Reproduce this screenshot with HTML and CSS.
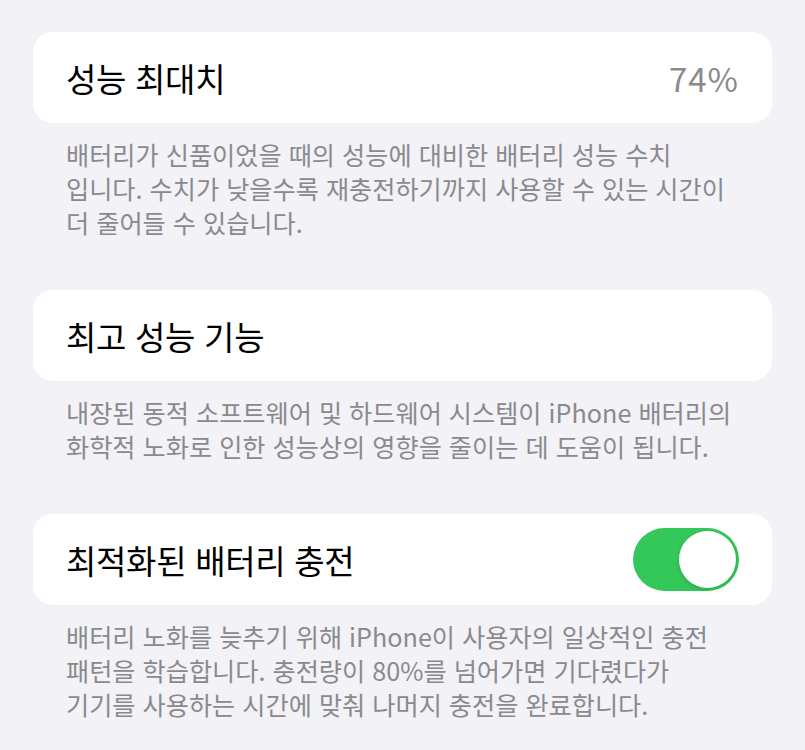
FILE: index.html
```html
<!DOCTYPE html>
<html lang="ko">

<head>
    <meta charset="utf-8">
    <title>배터리 성능 상태</title>
    <meta name="viewport" content="width=device-width, initial-scale=1">
    <link rel="stylesheet" href="styles.css">
</head>

<body>
    <div class="container">
        <section class="group">
            <div class="cell">
                <span class="cell-title">성능 최대치</span>
                <span class="cell-value">74%</span>
            </div>
            <p class="footer">배터리가 신품이었을 때의 성능에 대비한 배터리 성능 수치<br>입니다. 수치가 낮을수록 재충전하기까지 사용할 수 있는 시간이<br>더 줄어들 수 있습니다.</p>
        </section>

        <section class="group">
            <div class="cell">
                <span class="cell-title">최고 성능 기능</span>
            </div>
            <p class="footer">내장된 동적 소프트웨어 및 하드웨어 시스템이 iPhone 배터리의<br>화학적 노화로 인한 성능상의 영향을 줄이는 데 도움이 됩니다.</p>
        </section>

        <section class="group">
            <div class="cell">
                <span class="cell-title">최적화된 배터리 충전</span>
                <label class="switch">
                    <input type="checkbox" checked>
                    <span class="knob"></span>
                </label>
            </div>
            <p class="footer">배터리 노화를 늦추기 위해 iPhone이 사용자의 일상적인 충전<br>패턴을 학습합니다. 충전량이 80%를 넘어가면 기다렸다가<br>기기를 사용하는 시간에 맞춰 나머지 충전을 완료합니다.</p>
        </section>
    </div>
</body>

</html>
```

FILE: styles.css
```css
body {
    margin: 0;
    padding: 0;
    background-color: #f2f2f7;
    font-family: "Noto Sans CJK KR", "Noto Sans", sans-serif;
    color: #000;
}

.container {
    padding: 32px 33px 0 33px;
}

.group {
    margin-bottom: 51px;
}

.cell {
    display: flex;
    align-items: center;
    justify-content: space-between;
    height: 91px;
    padding: 0 33px;
    background-color: #fff;
    border-radius: 20px;
    box-sizing: border-box;
}

.cell-title {
    font-size: 33px;
    letter-spacing: -0.3px;
}

.cell-value {
    font-size: 33px;
    letter-spacing: 1px;
    color: #8a8a8e;
}

.footer {
    margin: 0;
    padding: 14px 0 0 33px;
    font-size: 25.2px;
    line-height: 34px;
    color: #8a8a8e;
    white-space: nowrap;
}

/* iOS style toggle */
.switch {
    position: relative;
    display: inline-block;
    width: 106px;
    height: 63px;
}

.switch input {
    display: none;
}

.knob {
    position: absolute;
    top: 0;
    left: 0;
    right: 0;
    bottom: 0;
    background-color: #e9e9eb;
    border-radius: 32px;
}

.knob:before {
    content: "";
    position: absolute;
    top: 3px;
    left: 3px;
    width: 57px;
    height: 57px;
    background-color: #fff;
    border-radius: 50%;
    box-shadow: 0 2px 4px rgba(0, 0, 0, 0.15);
}

.switch input:checked + .knob {
    background-color: #34c759;
}

.switch input:checked + .knob:before {
    left: 46px;
}
```
